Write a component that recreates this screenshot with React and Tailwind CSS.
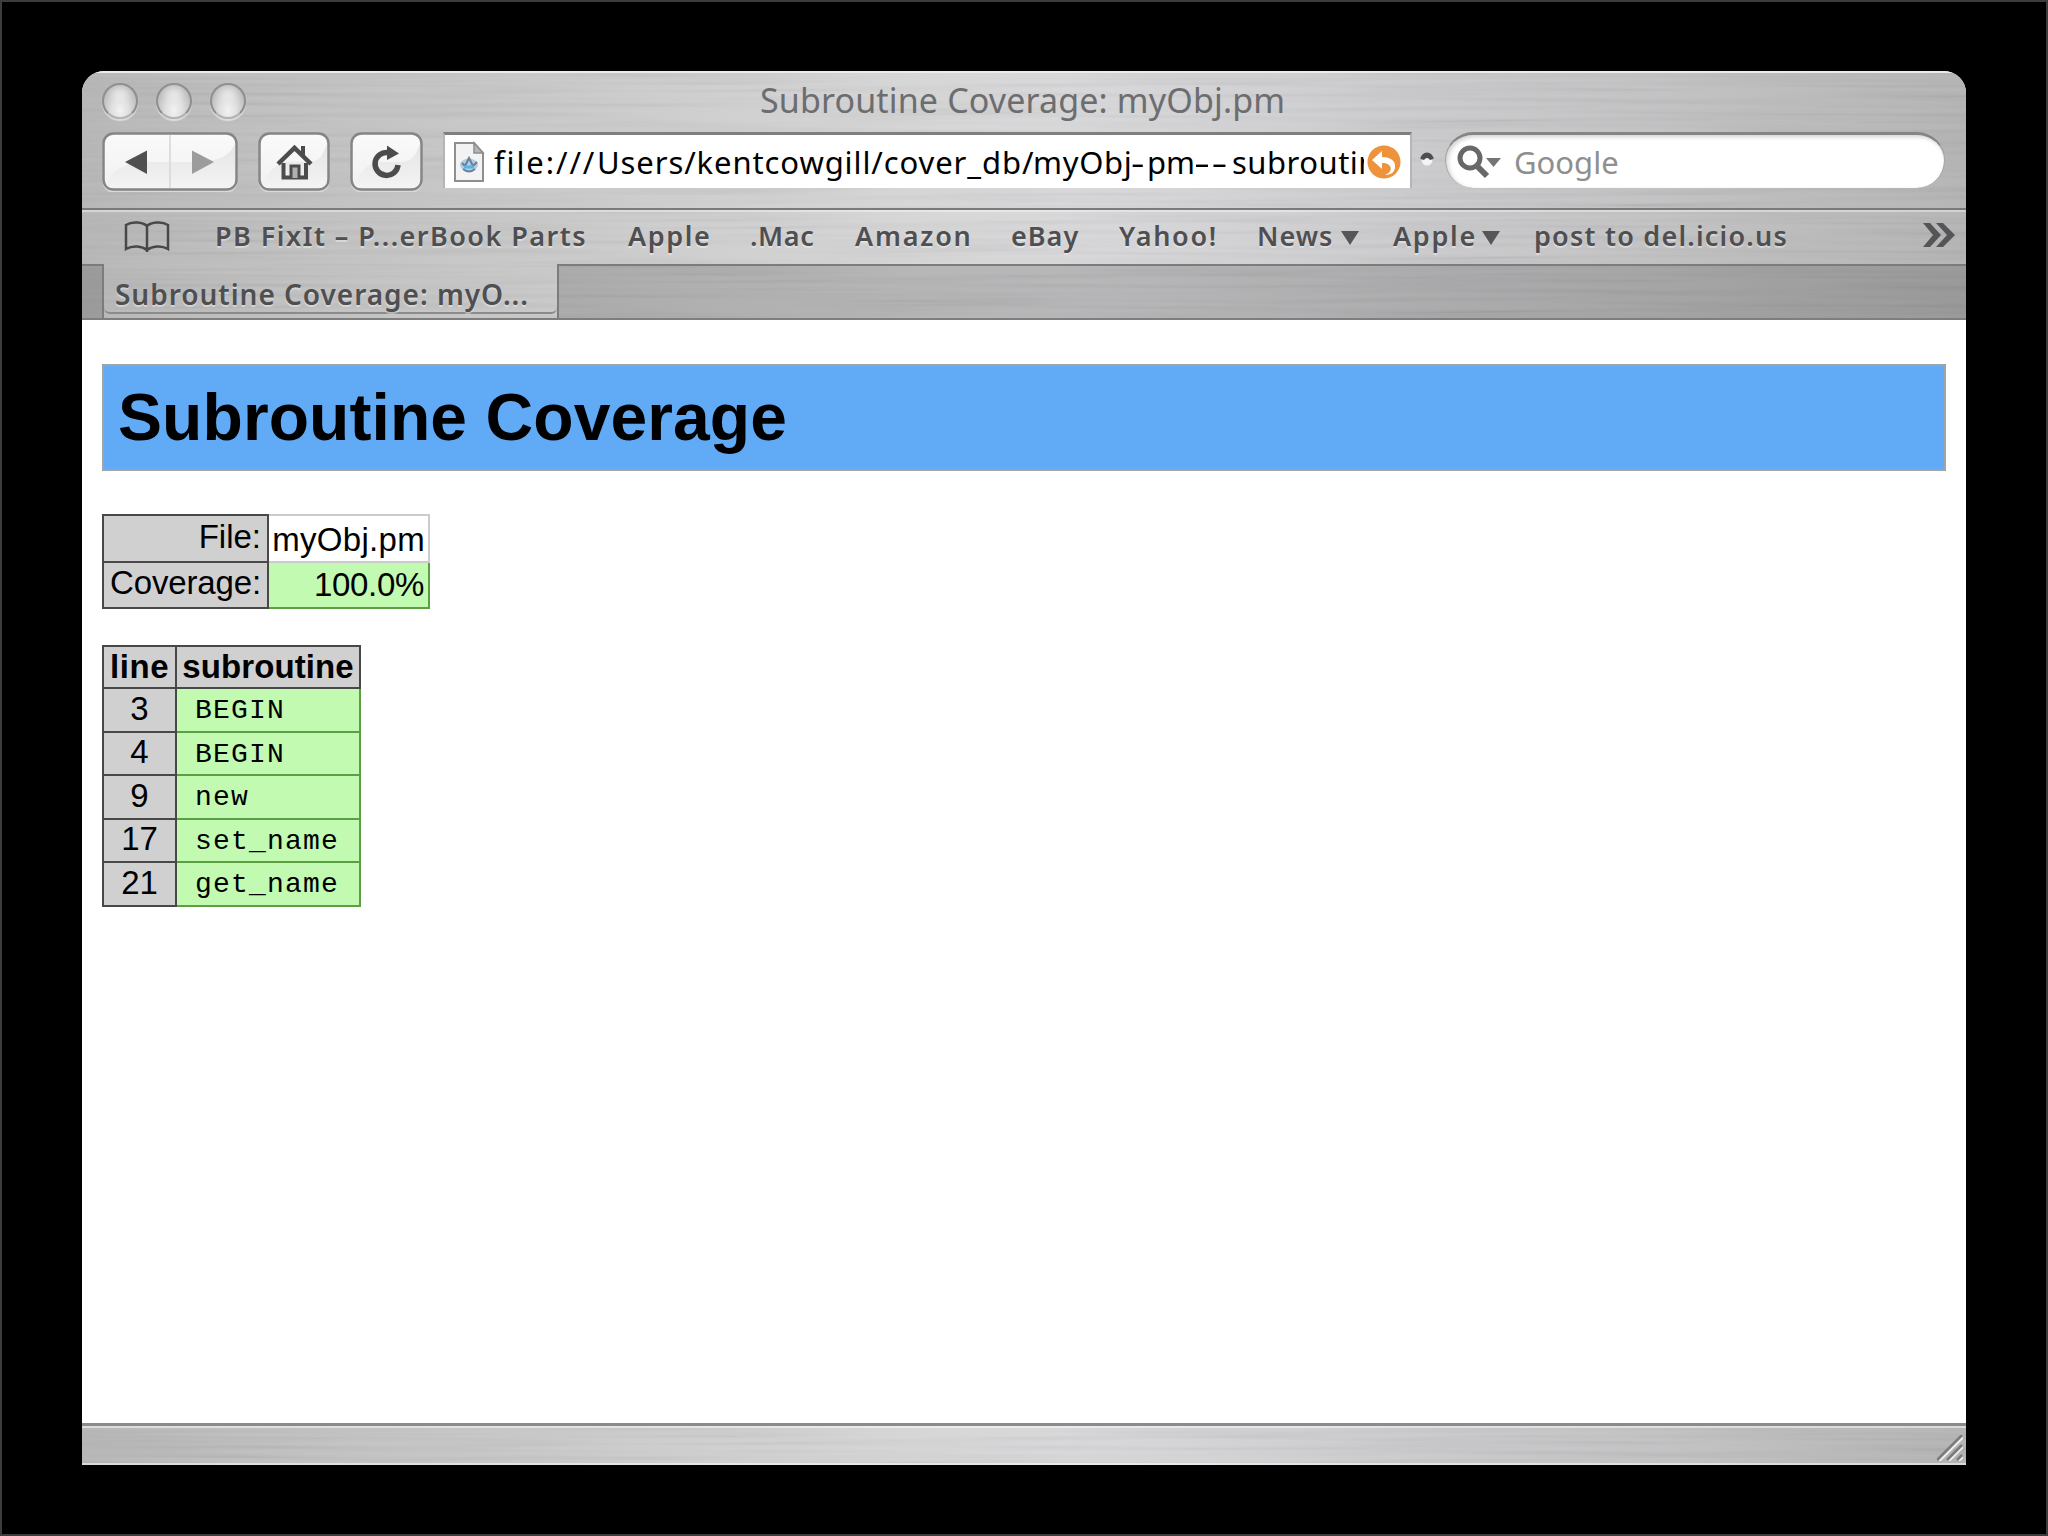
const SUBS = [
  ["3", "BEGIN"],
  ["4", "BEGIN"],
  ["9", "new"],
  ["17", "set_name"],
  ["21", "get_name"],
];

const METAL =
  "bg-[linear-gradient(90deg,#b4b4b4_0%,#bcbcbc_8%,#c8c7c8_25%,#d5d4d5_45%,#d6d5d7_52%,#c8c7c9_72%,#bbbabb_90%,#b2b1b2_100%)]";

function Brushed({ id }) {
  return (
    <svg className="absolute inset-0 h-full w-full pointer-events-none" aria-hidden="true">
      <filter id={id} x="0" y="0" width="100%" height="100%">
        <feTurbulence type="fractalNoise" baseFrequency="0.004 0.2" numOctaves="2" seed="4" />
        <feColorMatrix values="2 0 0 0 -0.3  2 0 0 0 -0.3  2 0 0 0 -0.3  0 0 0 0 0.06" />
      </filter>
      <rect width="100%" height="100%" filter={`url(#${id})`} />
    </svg>
  );
}

function Orb() {
  return (
    <div className="h-[36px] w-[36px] rounded-full border-[2px] border-[#8e8e8e] border-b-[#b4b4b4] bg-[radial-gradient(ellipse_at_50%_80%,#f2f2f2_0%,#dfdfdf_38%,#c2c2c2_72%,#a6a6a6_100%)] shadow-[0_2px_1px_rgba(255,255,255,.5)]">
      <div className="mx-auto mt-[4px] h-[9px] w-[16px] rounded-full bg-white/40 blur-[3px]" />
    </div>
  );
}

function Glass({ w, children }) {
  return (
    <svg width={w} height="60" viewBox={`0 0 ${w} 60`} className="block">
      <defs>
        <linearGradient id={`g${w}`} x1="0" y1="0" x2="0" y2="1">
          <stop offset="0" stopColor="#fafafa" />
          <stop offset="1" stopColor="#f1f1f1" />
        </linearGradient>
        <linearGradient id={`s${w}`} x1="0" y1="0" x2="0" y2="1">
          <stop offset="0" stopColor="#dedede" />
          <stop offset="1" stopColor="#f4f4f4" />
        </linearGradient>
      </defs>
      <rect x="1.5" y="2.5" width={w - 3} height="57" rx="10" fill="none" stroke="#dadada" strokeWidth="2" />
      <rect x="1.5" y="1.5" width={w - 3} height="56" rx="10" fill={`url(#g${w})`} stroke="#858585" strokeWidth="2.5" />
      <path
        d={`M4 52 C12 36 22 31 ${w * 0.35} 30 L${w * 0.72} 30 C${w * 0.87} 29 ${w - 7} 22 ${w - 3} 12 L${w - 3} 48 Q${w - 3} 56 ${w - 12} 56 L11 56 Q5 56 4 52Z`}
        fill={`url(#s${w})`}
        opacity="0.75"
      />
      {children}
    </svg>
  );
}

function Mark({ m, w, s, children }) {
  return (
    <span className={`block shrink-0 whitespace-nowrap ${m} ${w} ${s}`}>{children}</span>
  );
}

function Down({ m }) {
  return (
    <svg width="18" height="14" viewBox="0 0 18 14" className={`block shrink-0 ${m}`}>
      <path d="M0 0H18L9 14Z" fill="#565658" />
    </svg>
  );
}

const HEAD = "border-2 border-[#484848] bg-[#d1d0d1] p-0";
const GREEN = "border-2 border-[#5c9f42] bg-[#c1fab0] p-0";

export default function App() {
  return (
    <div className="h-[1536px] w-[2048px] overflow-hidden border-2 border-[#3c3c3c] bg-black pl-[80px] pt-[69px]">
      <div className="flex h-[1394px] w-[1884px] flex-col overflow-hidden rounded-t-[22px] bg-white font-['Noto_Sans',sans-serif]">
        {/* title and toolbar */}
        <div className={`relative h-[137px] shrink-0 border-t-2 border-[#ececec] ${METAL}`}>
          <Brushed id="n1" />
          <div className="relative flex h-[54px] items-center">
            <div className="ml-[20px] mt-[2px] flex w-[200px] gap-[18px]">
              <Orb />
              <Orb />
              <Orb />
            </div>
            <div className="ml-[458px] whitespace-nowrap text-[34px] leading-[54px] tracking-[0.14px] text-[#6c6d6f]">
              Subroutine Coverage: myObj.pm
            </div>
          </div>
          <div className="relative mt-[5px] flex items-start pl-[20px]">
            <Glass w={136}>
              <path d="M68 3V56" stroke="#d6d6d6" strokeWidth="1.5" />
              <path d="M23 30L45 18.500V42Z" fill="#505050" />
              <path d="M112 30L90 18.500V42Z" fill="#9c9c9c" />
            </Glass>
            <div className="ml-[20px]">
              <Glass w={72}>
                <path d="M20 32L36.500 16L53 32" fill="none" stroke="#4c4c4c" strokeWidth="4.500" />
                <path d="M45 14V24" stroke="#4c4c4c" strokeWidth="4" />
                <path d="M25.500 31V45.500H48V31" fill="none" stroke="#4c4c4c" strokeWidth="4" />
                <path d="M33 46V34H41V46" fill="#b0b0b0" stroke="#4c4c4c" strokeWidth="3" />
              </Glass>
            </div>
            <div className="ml-[20px]">
              <Glass w={73}>
                <path d="M38 20.500A11.500 11.500 0 1 0 48 33" fill="none" stroke="#4c4c4c" strokeWidth="5.500" />
                <path d="M37 13.500L49 21.500L37 28Z" fill="#4c4c4c" />
              </Glass>
            </div>
            <div className="ml-[20px] flex h-[56px] w-[969px] items-center border-x-2 border-t-[3px] border-x-[#b5b5b5] border-t-[#7f7f7f] bg-white pl-[8px]">
              <svg width="32" height="42" viewBox="0 0 32 42" className="block shrink-0">
                <path d="M2 2H21L30 12V40H2Z" fill="#f3f3f3" stroke="#8f8f8f" strokeWidth="2" />
                <path d="M21 2V12H30Z" fill="#b5b5b5" stroke="#8f8f8f" strokeWidth="1.500" />
                <ellipse cx="16" cy="24" rx="9" ry="6.500" fill="#b5cddf" />
                <path d="M9 22L12 25L16 17L20 25L24 21M10 28Q16 33 22 28" fill="none" stroke="#65829b" strokeWidth="2" />
                <path d="M11 26H21" stroke="#5bb0e8" strokeWidth="3" />
              </svg>
              <div className="ml-[9px] flex h-[50px] w-[870px] shrink-0 overflow-hidden whitespace-nowrap text-[31px] leading-[50px] text-black">
                <span className="block w-[103px] shrink-0 tracking-[1.900px]">file:///</span>
                <span className="block w-[436px] shrink-0 tracking-[0.900px]">Users/kentcowgill/cover_db/</span>
                <span className="block w-[98px] shrink-0 tracking-[0.700px]">myObj</span>
                <span className="block w-[16px] shrink-0 origin-left scale-x-[1.350]">-</span>
                <span className="block w-[47px] shrink-0">pm</span>
                <span className="block w-[38px] shrink-0 origin-left scale-x-[1.600] tracking-[1px]">--</span>
                <span className="block w-[132px] shrink-0 overflow-hidden tracking-[0.500px]">subroutine</span>
              </div>
              <svg width="34" height="34" viewBox="0 0 34 34" className="ml-[3px] block shrink-0">
                <circle cx="17" cy="17" r="16.500" fill="#ee923c" />
                <path d="M5 15L15 6V12C24 12 29 16 28 23C27 28 23 30 18 30C23 28 25 25 23 21C21 18.500 18 18 15 18V24Z" fill="#fff" />
              </svg>
            </div>
            <svg width="16" height="16" viewBox="0 0 16 16" className="ml-[7px] mt-[19px] block shrink-0">
              <circle cx="8" cy="9" r="5.500" fill="#f4f4f4" />
              <path d="M1.500 8A6.500 6.500 0 0 1 14.500 8L11 9Q8 5 5 9Z" fill="#4e4e4e" />
            </svg>
            <div className="ml-[10px] flex h-[56px] w-[500px] items-center rounded-full border-t-[3px] border-x border-x-[#a2a2a2] border-t-[#858585] bg-white pl-[9px] shadow-[inset_2px_2px_4px_rgba(0,0,0,.18)]">
              <svg width="48" height="36" viewBox="0 0 48 36" className="block shrink-0">
                <circle cx="15" cy="14" r="10" fill="none" stroke="#686868" strokeWidth="5" />
                <path d="M22 22L32 32" stroke="#686868" strokeWidth="6" />
                <path d="M31 14H46L38.500 23Z" fill="#757575" />
              </svg>
              <span className="ml-[11px] text-[31px] leading-[50px] text-[#8f8f8f]">Google</span>
            </div>
          </div>
        </div>

        {/* bookmarks */}
        <div className={`relative h-[56px] shrink-0 border-t-2 border-[#7b7a7b] ${METAL}`}>
          <Brushed id="n2" />
          <div className="relative flex h-[54px] items-center border-t-2 border-white/40 text-[27px] font-semibold leading-[50px] text-[#4f4f51] [text-shadow:0_2px_1px_rgba(255,255,255,.4)]">
            <svg width="46" height="32" viewBox="0 0 46 32" className="mb-[3px] ml-[42px] block shrink-0">
              <path
                d="M23 5C19 1 8 0 2 4V28C9 24 18 25 23 29C28 25 37 24 44 28V4C38 0 27 1 23 5ZM23 5V31"
                fill="none"
                stroke="#484848"
                strokeWidth="2.500"
              />
            </svg>
            <div className="flex pb-[4px]">
              <Mark m="ml-[45px]" w="w-[373px]" s="tracking-[1.460px]">PB FixIt – P...erBook Parts</Mark>
              <Mark m="ml-[40px]" w="w-[84px]" s="tracking-[1.600px]">Apple</Mark>
              <Mark m="ml-[38px]" w="w-[64px]" s="tracking-[0.600px]">.Mac</Mark>
              <Mark m="ml-[41px]" w="w-[119px]" s="tracking-[1.800px]">Amazon</Mark>
              <Mark m="ml-[37px]" w="w-[68px]" s="tracking-[1px]">eBay</Mark>
              <Mark m="ml-[40px]" w="w-[100px]" s="tracking-[1.700px]">Yahoo!</Mark>
              <Mark m="ml-[38px]" w="w-[80px]" s="tracking-[1px]">News</Mark>
              <Down m="ml-[4px] mt-[20px]" />
              <Mark m="ml-[34px]" w="w-[86px]" s="tracking-[1.700px]">Apple</Mark>
              <Down m="ml-[3px] mt-[20px]" />
              <Mark m="ml-[34px]" w="w-[256px]" s="tracking-[1.220px]">post to del.icio.us</Mark>
            </div>
            <svg width="32" height="26" viewBox="0 0 32 26" className="ml-[133px] mb-[6px] block shrink-0">
              <path d="M0 1H7L18 13L7 25H0L10 13ZM13 1H20L32 13L20 25H13L24 13Z" fill="#555557" />
            </svg>
          </div>
        </div>

        {/* tabs */}
        <div className={`relative flex h-[56px] shrink-0 border-b-2 border-[#7e7e7e] ${METAL}`}>
          <Brushed id="n3" />
          <div className="relative h-[54px] w-[22px] border-r-2 border-t-2 border-[#7c7c7c] bg-black/15" />
          <div className="relative h-[50px] w-[453px] whitespace-nowrap rounded-b-[6px] border-b-2 border-[#8b8b8b] pl-[11px] text-[28px] font-semibold leading-[60px] tracking-[0.970px] text-[#4f4f51] [text-shadow:0_2px_1px_rgba(255,255,255,.4)]">
            Subroutine Coverage: myO...
          </div>
          <div className="relative h-[54px] flex-1 border-l-2 border-t-2 border-[#7c7c7c] bg-black/15" />
        </div>

        {/* page */}
        <div className="flex-1 pl-[20px] pr-[20px] pt-[44px] font-['Liberation_Sans',sans-serif] text-black">
          <h1 className="h-[107px] border-2 border-[#a0a3a8] bg-[#61abf6] pl-[14px] text-[66px] font-bold leading-[102px] tracking-[0.080px]">
            Subroutine Coverage
          </h1>

          <table className="mt-[43px] w-[328px] table-fixed border-collapse text-[33px] leading-[40px]">
            <tbody>
              <tr className="h-[47px]">
                <td className={`w-[165px] text-right ${HEAD}`}>
                  <div className="pb-[4px] pr-[6px]">File:</div>
                </td>
                <td className="border-2 border-[#cbcbcd] p-0 text-right">
                  <div className="pr-[3px] pt-[2px] tracking-[0.300px]">myObj.pm</div>
                </td>
              </tr>
              <tr className="h-[46px]">
                <td className={`text-right ${HEAD}`}>
                  <div className="pb-[4px] pr-[6px] tracking-[-0.150px]">Coverage:</div>
                </td>
                <td className={`text-right ${GREEN}`}>
                  <div className="pr-[4px] tracking-[-0.300px]">100.0%</div>
                </td>
              </tr>
            </tbody>
          </table>

          <table className="mt-[36px] w-[259px] table-fixed border-collapse text-[33px] leading-[38px]">
            <tbody>
              <tr className="h-[42px]">
                <th className={`w-[73px] text-center font-bold tracking-[0.600px] ${HEAD}`}>line</th>
                <th className={`text-center font-bold tracking-[0.100px] ${HEAD}`}>subroutine</th>
              </tr>
              {SUBS.map(([n, name]) => (
                <tr key={n} className="h-[43.500px]">
                  <td className={`text-center ${HEAD}`}>
                    <div className="pb-[2px]">{n}</div>
                  </td>
                  <td className={GREEN}>
                    <div className="pl-[18px] pt-[3px] font-['Liberation_Mono',monospace] text-[28px] tracking-[1.200px]">
                      {name}
                    </div>
                  </td>
                </tr>
              ))}
            </tbody>
          </table>
        </div>

        {/* status bar */}
        <div className={`relative flex h-[42px] shrink-0 justify-end border-t-[3px] border-[#8c8b8c] ${METAL}`}>
          <Brushed id="n4" />
          <div className="relative flex w-full items-end justify-end border-b-2 border-t-2 border-white/50 pb-[2px] pr-[3px]">
            <svg width="26" height="26" viewBox="0 0 26 26" className="block">
              <path d="M2.500 26L26 2.500M12 26L26 12M22 26L26 22" stroke="#f0f0f0" strokeWidth="2" />
              <path d="M0 25L25 0M10 25L25 10M20 25L25 20" stroke="#7b7b7b" strokeWidth="2.500" />
            </svg>
          </div>
        </div>
      </div>
    </div>
  );
}
